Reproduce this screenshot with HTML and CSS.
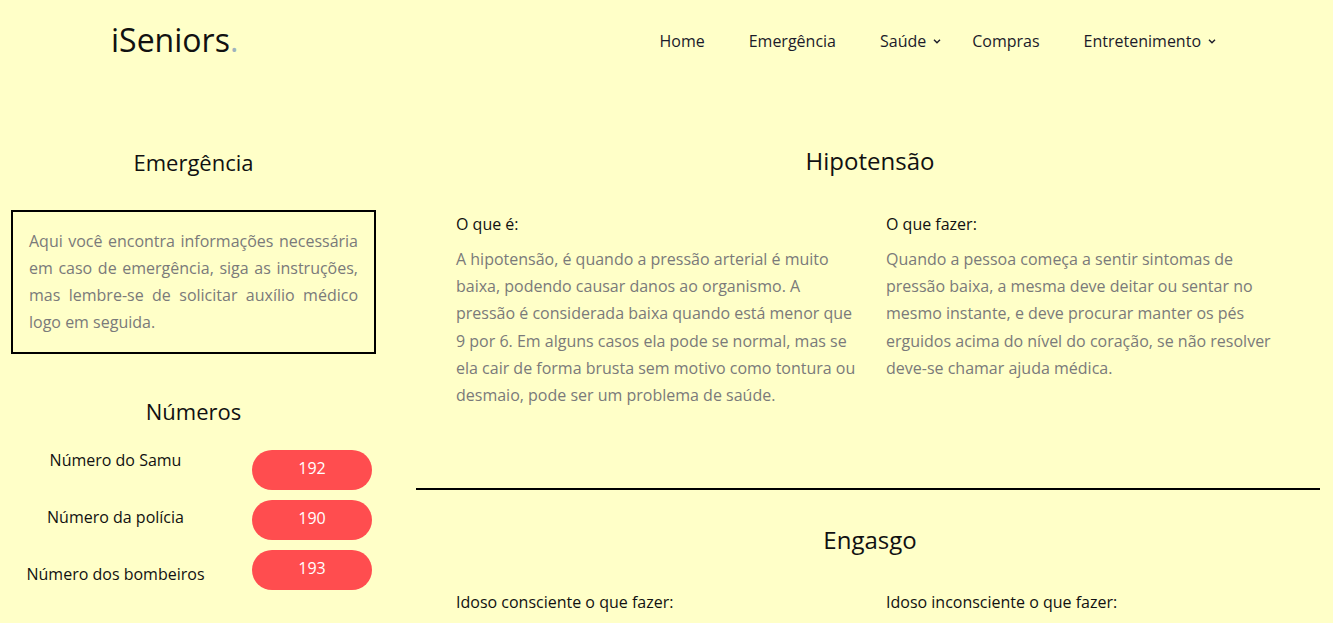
FILE: index.html
```html
<!DOCTYPE html>
<html lang="pt-BR">
<head>
<meta charset="utf-8">
<title>iSeniors - Emergência</title>
<link rel="stylesheet" href="styles.css">
</head>
<body>
<header class="topbar">
  <a class="logo" href="#">iSeniors<span class="logo-dot">.</span></a>
  <nav class="nav">
    <a class="nav-link" href="#">Home</a>
    <a class="nav-link" href="#">Emergência</a>
    <a class="nav-link drop" href="#">Saúde<svg class="chev" width="8" height="5" viewBox="0 0 8 5"><polyline points="1,0.8 4,3.8 7,0.8" fill="none" stroke="#1b1b2a" stroke-width="1.4"/></svg></a>
    <a class="nav-link" href="#">Compras</a>
    <a class="nav-link drop" href="#">Entretenimento<svg class="chev" width="8" height="5" viewBox="0 0 8 5"><polyline points="1,0.8 4,3.8 7,0.8" fill="none" stroke="#1b1b2a" stroke-width="1.4"/></svg></a>
  </nav>
</header>

<div class="page">
  <aside class="sidebar">
    <h2 class="side-title">Emergência</h2>
    <div class="info-box">
      Aqui você encontra informações necessária em caso de emergência, siga as instruções, mas lembre-se de solicitar auxílio médico logo em seguida.
    </div>
    <h2 class="side-title numbers-title">Números</h2>
    <div class="numbers">
      <div class="num-labels">
        <span>Número do Samu</span>
        <span>Número da polícia</span>
        <span>Número dos bombeiros</span>
      </div>
      <div class="num-buttons">
        <a class="pill" href="#">192</a>
        <a class="pill" href="#">190</a>
        <a class="pill" href="#">193</a>
      </div>
    </div>
  </aside>

  <main class="content">
    <section class="topic">
      <h1 class="topic-title">Hipotensão</h1>
      <div class="cols">
        <div class="col">
          <h3 class="col-title">O que é:</h3>
          <p class="col-text">A hipotensão, é quando a pressão arterial é muito baixa, podendo causar danos ao organismo. A pressão é considerada baixa quando está menor que 9 por 6. Em alguns casos ela pode se normal, mas se ela cair de forma brusta sem motivo como tontura ou desmaio, pode ser um problema de saúde.</p>
        </div>
        <div class="col">
          <h3 class="col-title">O que fazer:</h3>
          <p class="col-text">Quando a pessoa começa a sentir sintomas de pressão baixa, a mesma deve deitar ou sentar no mesmo instante, e deve procurar manter os pés erguidos acima do nível do coração, se não resolver deve-se chamar ajuda médica.</p>
        </div>
      </div>
    </section>
    <hr class="divider">
    <section class="topic topic-second">
      <h1 class="topic-title">Engasgo</h1>
      <div class="cols">
        <div class="col">
          <h3 class="col-title">Idoso consciente o que fazer:</h3>
        </div>
        <div class="col">
          <h3 class="col-title">Idoso inconsciente o que fazer:</h3>
        </div>
      </div>
    </section>
  </main>
</div>
</body>
</html>
```

FILE: styles.css
```css
* { box-sizing: border-box; }

html, body {
  margin: 0;
  padding: 0;
  background: #ffffc8;
  font-family: "Open Sans", "Noto Sans", "Liberation Sans", sans-serif;
  color: #111;
}

a { text-decoration: none; color: inherit; }

.topbar {
  display: flex;
  align-items: center;
  height: 82px;
  padding-left: 111px;
}

.logo {
  font-size: 32px;
  line-height: 1;
  color: #111;
  margin-top: -2px;
}

.logo-dot { color: #9db3be; }

.nav {
  display: flex;
  align-items: center;
  margin-left: auto;
  margin-right: 108px;
}

.nav-link {
  display: flex;
  align-items: center;
  font-size: 16px;
  color: #1b1b2a;
  padding: 0 22px;
}

.nav-link.drop { padding-right: 9px; }

.chev { margin-left: 7px; margin-top: 1px; }

.page {
  display: flex;
  align-items: flex-start;
}

.sidebar {
  width: 387px;
  flex: none;
  padding-top: 67px;
}

.side-title {
  margin: 0;
  font-size: 22px;
  font-weight: 400;
  line-height: 26px;
  text-align: center;
  color: #111;
}

.info-box {
  margin: 35px 11px 0;
  border: 2px solid #000;
  padding: 16px;
  font-size: 16px;
  line-height: 27px;
  color: #7a7a7a;
  text-align: justify;
}

.numbers-title { margin-top: 44px; }

.numbers {
  display: flex;
  margin-top: 26px;
}

.num-labels {
  width: 231px;
  display: flex;
  flex-direction: column;
  gap: 33px;
  text-align: center;
  font-size: 16px;
  line-height: 24px;
  margin-top: -2px;
  color: #111;
}

.num-buttons {
  display: flex;
  flex-direction: column;
  gap: 10px;
  margin-left: 21px;
}

.pill {
  width: 120px;
  height: 40px;
  border-radius: 20px;
  background: #ff4d4f;
  color: #fff;
  font-size: 16px;
  display: flex;
  align-items: center;
  justify-content: center;
  padding-bottom: 5px;
}

.content {
  width: 904px;
  margin-left: 29px;
  padding-top: 64px;
}

.topic-title {
  margin: 0;
  font-size: 24px;
  font-weight: 400;
  line-height: 29px;
  text-align: center;
  color: #111;
  padding-left: 4px;
}

.cols {
  display: grid;
  grid-template-columns: 399.5px 399.5px;
  column-gap: 30.5px;
  padding-left: 40px;
  margin-top: 37px;
}

.col-title {
  margin: 0;
  font-size: 16px;
  font-weight: 400;
  line-height: 24px;
  color: #111;
}

.col-text {
  margin: 10px 0 0;
  font-size: 16px;
  line-height: 27.2px;
  color: #7a7a7a;
}

.divider {
  margin: 79px 0 0;
  border: 0;
  height: 2px;
  background: #000;
}

.topic-second { padding-top: 35px; }
.topic-second .cols { margin-top: 36px; }
```
